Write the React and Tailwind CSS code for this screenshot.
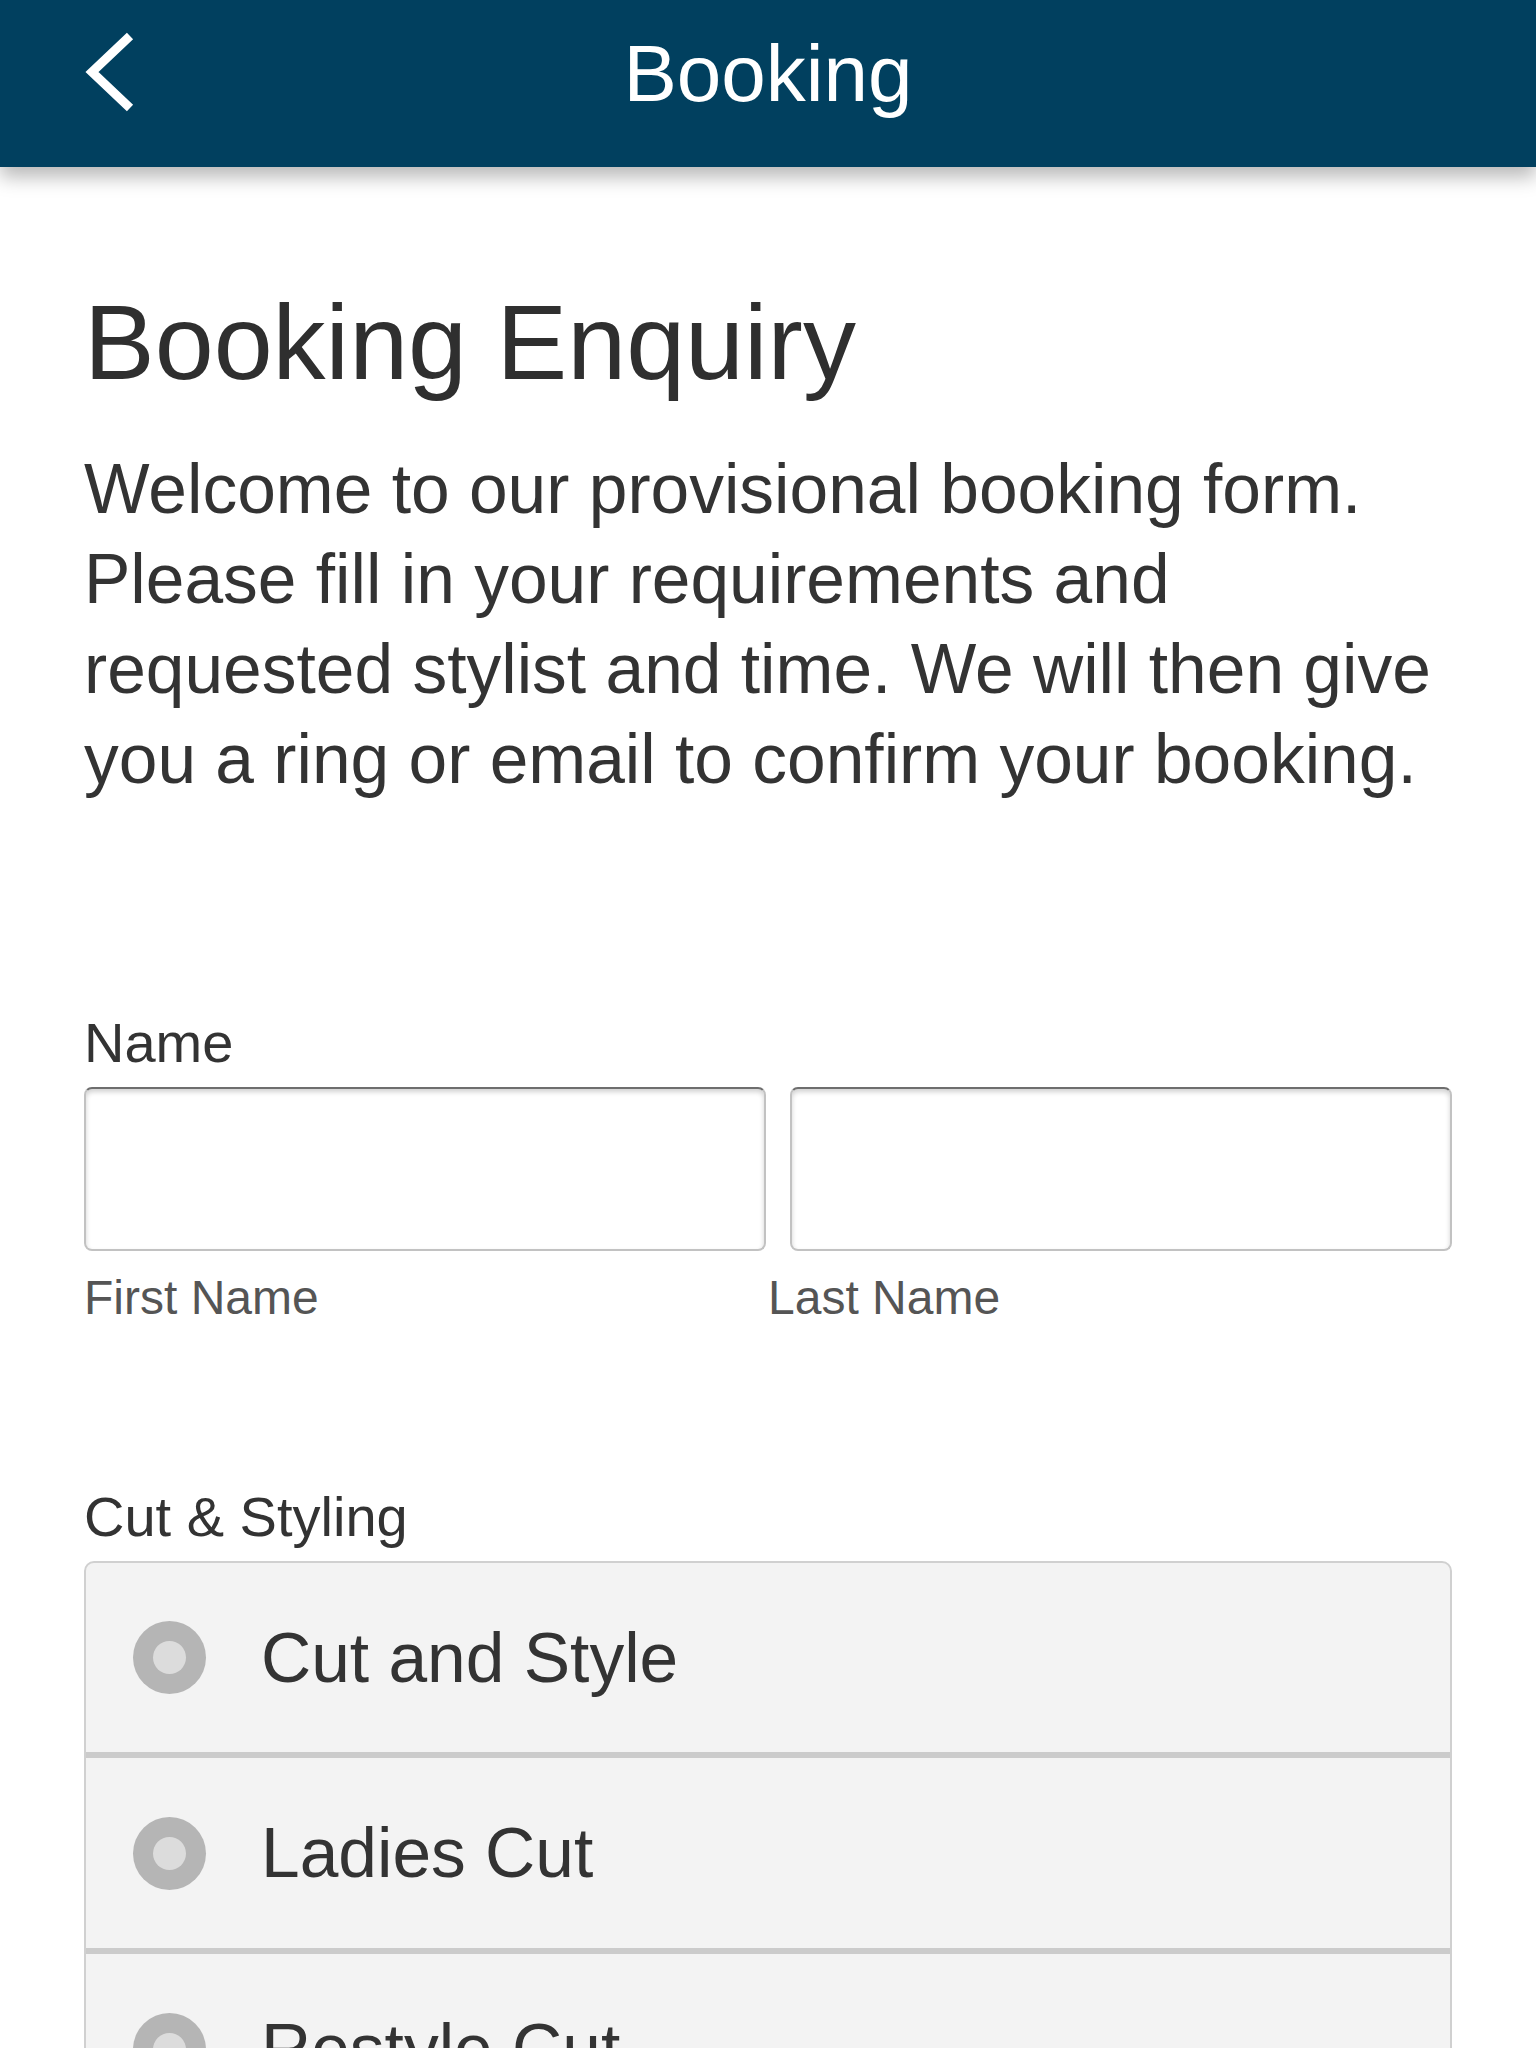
import React from 'react';

const options = ["Cut and Style", "Ladies Cut", "Restyle Cut", "Gents Cut"];

const BackIcon = () => (
  <svg width="60" height="90" viewBox="0 0 60 90" fill="none">
    <path d="M52 8 L14 44 L52 80" stroke="#ffffff" strokeWidth="9" strokeLinejoin="miter" />
  </svg>
);

const Radio = () => (
  <div className="flex h-[73px] w-[73px] shrink-0 items-center justify-center rounded-full bg-[#b5b5b5]">
    <div className="h-[33px] w-[33px] rounded-full bg-[#dcdcdc]" />
  </div>
);

const App = () => {
  return (
    <div className="h-[2048px] overflow-hidden bg-white font-['Liberation_Sans',Arial,sans-serif]">
      <header className="relative z-10 grid h-[167px] grid-cols-[1fr_auto_1fr] items-start bg-[#01405f] pt-[28px] shadow-[0_10px_18px_rgba(0,0,0,0.28)]">
        <div className="pl-[78px]">
          <BackIcon />
        </div>
        <h1 className="text-[80px] leading-[92px] text-white">Booking</h1>
        <div />
      </header>

      <main className="px-[84px] pt-[112px]">
        <h2 className="text-[106px] leading-[127px] text-[#2f2f2f]">Booking Enquiry</h2>
        <p className="mt-[38px] text-[69.5px] leading-[90px] text-[#333333]">
          Welcome to our provisional booking form. Please fill in your requirements and requested stylist and time. We will then give you a ring or email to confirm your booking.
        </p>

        <div className="mt-[207px]">
          <label className="block text-[56px] leading-[64px] text-[#333333]">Name</label>
          <div className="mt-[12px] grid grid-cols-2">
            <div className="mr-[2px]">
              <input className="block h-[164px] w-full rounded-[8px] border-2 border-[#c2c2c2] border-t-[#6e6e6e] bg-white shadow-[inset_0_3px_5px_rgba(0,0,0,0.18)]" />
              <div className="mt-[19px] text-[48px] leading-[56px] text-[#555555]">First Name</div>
            </div>
            <div>
              <input className="ml-[22px] block h-[164px] w-[662px] rounded-[8px] border-2 border-[#c2c2c2] border-t-[#6e6e6e] bg-white shadow-[inset_0_3px_5px_rgba(0,0,0,0.18)]" />
              <div className="mt-[19px] text-[48px] leading-[56px] text-[#555555]">Last Name</div>
            </div>
          </div>
        </div>

        <div className="mt-[159px]">
          <label className="block text-[56px] leading-[64px] text-[#333333]">Cut &amp; Styling</label>
          <div className="mt-[12px] overflow-hidden rounded-t-[10px] border-2 border-[#d0d0d0] bg-[#f3f3f3]">
            {options.map((opt, i) => (
              <div
                key={opt}
                className={i === 0 ? "flex h-[189px] items-center pl-[47px]" : "flex h-[196px] items-center border-t-[6px] border-[#cbcbcb] pl-[47px]"}
              >
                <Radio />
                <span className="ml-[55px] text-[69.5px] leading-[80px] text-[#333333]">{opt}</span>
              </div>
            ))}
          </div>
        </div>
      </main>
    </div>
  );
};

export default App;
